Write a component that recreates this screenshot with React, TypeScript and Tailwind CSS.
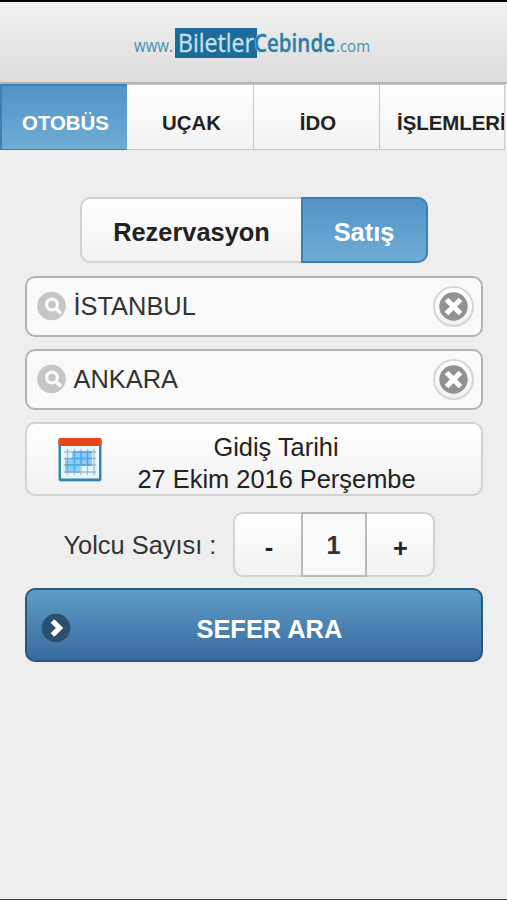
import { useState } from "react";
import clsx from "clsx";

const TABS = ["OTOBÜS", "UÇAK", "İDO", "İŞLEMLERİ"];

function Logo() {
  return (
    <svg
      width="240"
      height="34"
      viewBox="0 0 240 34"
      className="mt-[1px] overflow-visible font-['Open_Sans',sans-serif]"
    >
      <rect x="43" y="2" width="82" height="30" fill="#1c6c97" />
      <text x="2" y="26" fontSize="18" fill="#4d8cab" textLength="39" lengthAdjust="spacingAndGlyphs">
        www.
      </text>
      <text x="46" y="25.5" fontSize="25" fill="#c4e2f1" stroke="#c4e2f1" strokeWidth=".3" textLength="76" lengthAdjust="spacingAndGlyphs">
        Biletler
      </text>
      <text
        x="122"
        y="25.5"
        fontSize="24.500"
        fontWeight="600"
        fill="#2c7ba1"
        stroke="#b9d6e3"
        strokeWidth="1"
        paintOrder="stroke"
        textLength="81"
        lengthAdjust="spacingAndGlyphs"
      >
        Cebinde
      </text>
      <text x="204" y="26" fontSize="17" fill="#4d8cab" textLength="34" lengthAdjust="spacingAndGlyphs">
        .com
      </text>
    </svg>
  );
}

function SearchIcon() {
  return (
    <svg width="30" height="30" viewBox="0 0 30 30" fill="none" className="-mt-px">
      <circle cx="14.5" cy="15" r="14.3" fill="#c5c5c5" />
      <circle cx="15" cy="13.5" r="5.4" stroke="#fafafa" strokeWidth="3.2" />
      <path d="m18.500 17 5.500 5.500" stroke="#fafafa" strokeWidth="3.500" />
    </svg>
  );
}

function ClearButton({ onClick }: { onClick: () => void }) {
  return (
    <button
      type="button"
      aria-label="Temizle"
      onClick={onClick}
      className="-mt-px flex size-[41px] items-center justify-center rounded-full border-2 border-[#d6d6d6] bg-linear-to-b from-white to-[#f1f1f1]"
    >
      <svg width="29" height="29" viewBox="0 0 29 29" className="shrink-0">
        <circle cx="14.5" cy="14.5" r="14.2" fill="#929292" />
        <path d="m7.500 7.500 14 14M21.500 7.500l-14 14" stroke="#fff" strokeWidth="5.200" />
      </svg>
    </button>
  );
}

function CityField({ value, onClear }: { value: string; onClear: () => void }) {
  return (
    <div className="flex h-[61px] items-center rounded-[10px] border-2 border-[#b3b3b3] bg-[#f9f9f9] pl-[10px] pr-[7px]">
      <SearchIcon />
      <span className="ml-[7px] flex-1 pt-px text-[25.4px] leading-none text-[#333]">
        {value}
      </span>
      <ClearButton onClick={onClear} />
    </div>
  );
}

function CalendarIcon() {
  return (
    <svg width="44" height="46" viewBox="0 0 44 46" className="mt-[2px]">
      <rect x="1" y="3" width="42" height="42" rx="2" fill="#777" opacity=".35" />
      <rect x=".5" y="2" width="43" height="42" rx="2" fill="#3587b0" />
      <rect x="3" y="6" width="38" height="35.500" fill="#e6f6fd" />
      <path d="M2 1h40a1.500 1.500 0 0 1 1.500 1.500V9H.5V2.500A1.500 1.500 0 0 1 2 1Z" fill="#e8451c" />
      <path d="M14 15h20v14H22v7H7V21h7Z" fill="#8fcdf8" />
      <path
        d="M9.500 12v26M16.500 12v26M23 12v26M29.500 12v26M36 12v26M6 15h32M6 21.500h32M6 28h32M6 35h32"
        stroke="#7c97a8"
        strokeWidth="1.300"
        opacity=".6"
      />
      <path d="M15 15h19M14 21.500h20M7 28h27M16.500 15v20M23 15v14M29.500 15v13" stroke="#4ca6ec" strokeWidth="1.300" />
    </svg>
  );
}

export default function App() {
  const [tab, setTab] = useState(0);
  const [mode, setMode] = useState("Satış");
  const [from, setFrom] = useState("İSTANBUL");
  const [to, setTo] = useState("ANKARA");
  const [count, setCount] = useState(1);

  return (
    <div className="flex h-[900px] w-[507px] flex-col overflow-hidden border-b border-[#444] bg-[#eee] font-['Liberation_Sans',Arial,sans-serif] text-[#222]">
      <header className="flex h-[84px] shrink-0 items-center justify-center border-b-2 border-t-2 border-b-[#b3b3b3] border-t-black bg-linear-to-b from-[#f0f0f0] to-[#dddddd] pr-[3px]">
        <Logo />
      </header>

      <nav className="grid h-[66px] w-[505px] shrink-0 grid-cols-[127px_127px_126px_125px]">
        {TABS.map((label, i) => (
          <button
            key={label}
            type="button"
            onClick={() => setTab(i)}
            className={clsx(
              "flex min-w-0 items-center overflow-hidden whitespace-nowrap border-b pt-[12px] text-[20.4px] font-bold",
              i === 3 ? "justify-start pl-[17px]" : "justify-center",
              i === tab
                ? "border-l-2 border-t-2 border-[#3f80b0] bg-linear-to-b from-[#5393c5] to-[#6facd5] pl-[2px] text-white"
                : "border-r border-t border-[#c8c8c8] bg-linear-to-b from-white to-[#f1f1f1]",
              (i === 1 || i === 2) && "pl-[3px]"
            )}
          >
            {label}
          </button>
        ))}
      </nav>

      <main className="flex flex-col px-[24.500px] pt-[47px]">
        <div className="mx-auto flex h-[66px] w-[348px] text-[25.4px] font-bold">
          <button
            type="button"
            onClick={() => setMode("Rezervasyon")}
            className="w-[221px] rounded-l-[10px] border-2 border-r-0 border-[#d2d2d2] bg-linear-to-b from-white to-[#f1f1f1] pl-px pt-[4px]"
          >
            Rezervasyon
          </button>
          <button
            type="button"
            onClick={() => setMode("Satış")}
            className={clsx(
              "flex-1 rounded-r-[10px] border-2 pt-[4px]",
              mode === "Satış"
                ? "border-[#3a7fb0] bg-linear-to-b from-[#5393c5] to-[#6facd5] text-white"
                : "border-[#d2d2d2] bg-linear-to-b from-white to-[#f1f1f1]"
            )}
          >
            Satış
          </button>
        </div>

        <div className="mt-[13px] flex flex-col gap-[12px]">
          <CityField value={from} onClear={() => setFrom("")} />
          <CityField value={to} onClear={() => setTo("")} />
        </div>

        <button
          type="button"
          className="mt-[12px] flex h-[74px] items-center rounded-[10px] border-2 border-[#d2d2d2] bg-linear-to-b from-white to-[#f1f1f1] pl-[31px]"
        >
          <CalendarIcon />
          <span className="ml-[36px] w-[277px] whitespace-nowrap pt-[8px] text-center text-[25.4px] leading-[32px]">
            Gidiş Tarihi
            <br />
            27 Ekim 2016 Perşembe
          </span>
        </button>

        <div className="mt-[16px] flex h-[65px] items-center pl-[39px]">
          <span className="w-[169px] whitespace-nowrap pt-px text-[25.4px] text-[#333]">
            Yolcu Sayısı :
          </span>
          <div className="flex h-full w-[202px] text-[25.4px] font-bold">
            <button
              type="button"
              onClick={() => setCount(Math.max(1, count - 1))}
              className="w-[68px] rounded-l-[10px] border-2 border-r-0 border-[#d2d2d2] bg-linear-to-b from-white to-[#f1f1f1] pl-[3px] pt-[6px]"
            >
              -
            </button>
            <span className="flex w-[66px] items-center justify-center border-2 border-[#b9b9b9] bg-[#f9f9f9] pt-[2px] text-[#333]">
              {count}
            </span>
            <button
              type="button"
              onClick={() => setCount(count + 1)}
              className="w-[68px] rounded-r-[10px] border-2 border-l-0 border-[#d2d2d2] bg-linear-to-b from-white to-[#f1f1f1] pl-[2px] pt-[7px]"
            >
              +
            </button>
          </div>
        </div>

        <button
          type="button"
          className="mt-[11px] flex h-[74px] items-center rounded-[10px] border-2 border-[#245b80] bg-linear-to-b from-[#5f9cc5] to-[#396b9e] pl-[14px] text-[25.4px] font-bold text-white"
        >
          <svg width="30" height="30" viewBox="0 0 30 30" className="mt-[6px]">
            <circle cx="15" cy="15" r="14.300" fill="#2a4f70" />
            <path d="m11.500 8 7 7-7 7" fill="none" stroke="#fff" strokeWidth="5.200" />
          </svg>
          <span className="ml-[126px] pt-[9px]">SEFER ARA</span>
        </button>
      </main>
    </div>
  );
}
